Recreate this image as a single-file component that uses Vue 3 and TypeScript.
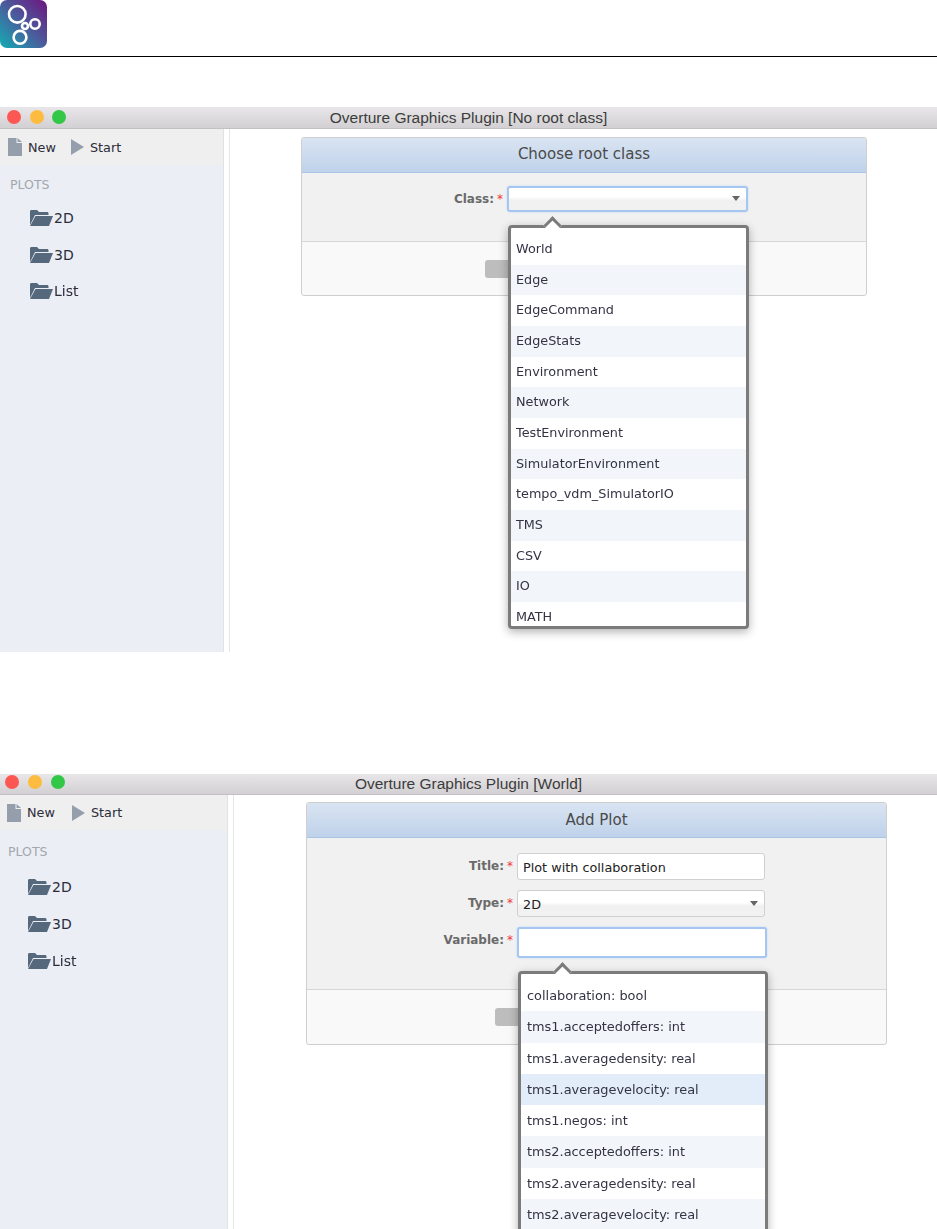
<script setup lang="ts">
interface Field { label: string; value: string; kind: 'text' | 'select' }
const plots: string[] = ['2D', '3D', 'List']
const classes: string[] = ['World', 'Edge', 'EdgeCommand', 'EdgeStats', 'Environment', 'Network', 'TestEnvironment', 'SimulatorEnvironment', 'tempo_vdm_SimulatorIO', 'TMS', 'CSV', 'IO', 'MATH']
const variables: string[] = ['collaboration: bool', 'tms1.acceptedoffers: int', 'tms1.averagedensity: real', 'tms1.averagevelocity: real', 'tms1.negos: int', 'tms2.acceptedoffers: int', 'tms2.averagedensity: real', 'tms2.averagevelocity: real']
const fields: Field[] = [
  { label: 'Title:', value: 'Plot with collaboration', kind: 'text' },
  { label: 'Type:', value: '2D', kind: 'select' },
]
</script>

<template>
  <div class="page">
    <header class="brand">
      <svg class="logo" width="47" height="48" viewBox="0 0 47 48">
        <defs>
          <linearGradient id="lg" x1="0" y1="1" x2="1" y2="0">
            <stop offset="0" stop-color="#12aeb4" />
            <stop offset="0.5" stop-color="#4a5c9c" />
            <stop offset="1" stop-color="#6e1580" />
          </linearGradient>
        </defs>
        <rect width="47" height="48" rx="7" fill="url(#lg)" />
        <g fill="none" stroke="#fff" stroke-width="2.6">
          <circle cx="17.300" cy="14.300" r="8.300" />
          <circle cx="35" cy="24" r="4.700" />
          <circle cx="25" cy="26" r="3" />
          <circle cx="20" cy="37.300" r="6.400" />
        </g>
      </svg>
    </header>

    <section class="window first">
      <div class="titlebar">
        <i class="dot red"></i><i class="dot yellow"></i><i class="dot green"></i>
        <span class="wintitle">Overture Graphics Plugin [No root class]</span>
      </div>
      <div class="winbody">
        <aside class="sidebar">
          <div class="tools">
            <span class="tool">
              <svg width="14" height="18" viewBox="0 0 14 18"><path d="M0 0h8.500v5H14v13H0z" fill="#959fab" /><path d="M9.500 0 14 4H9.500z" fill="#959fab" /></svg>New
            </span>
            <span class="tool">
              <svg width="13" height="16" viewBox="0 0 13 16"><path d="M0 0l13 8-13 8z" fill="#959fab" /></svg>Start
            </span>
          </div>
          <div class="plots-head">PLOTS</div>
          <div v-for="p in plots" :key="p" class="plot">
            <svg width="24" height="18" viewBox="0 0 24 18"><path d="M1 16V2.500C1 1.500 1.600 1 2.500 1H8l2 2h8c1 0 1.500.5 1.500 1.500V6H6L1 16z" fill="#56687c" /><path d="M6.500 7H24l-4 10H1z" fill="#56687c" /></svg>
            <span>{{ p }}</span>
          </div>
        </aside>
        <div class="divider"></div>
        <main class="content">
          <div class="card">
            <div class="card-head">Choose root class</div>
            <div class="card-body one">
              <div class="form-row">
                <label class="lab">Class:<b>*</b></label>
                <div class="control select focus"><span></span><i class="caret"></i></div>
              </div>
            </div>
            <div class="card-foot one"><span class="btn"></span></div>
            <div class="popup pop-class">
              <div class="arrow"></div>
              <div class="list">
                <div v-for="(c, i) in classes" :key="c" class="item" :class="{ odd: i % 2 === 1 }">{{ c }}</div>
              </div>
            </div>
          </div>
        </main>
      </div>
    </section>

    <section class="window second">
      <div class="titlebar">
        <i class="dot red"></i><i class="dot yellow"></i><i class="dot green"></i>
        <span class="wintitle">Overture Graphics Plugin [World]</span>
      </div>
      <div class="winbody">
        <aside class="sidebar">
          <div class="tools">
            <span class="tool">
              <svg width="14" height="18" viewBox="0 0 14 18"><path d="M0 0h8.500v5H14v13H0z" fill="#959fab" /><path d="M9.500 0 14 4H9.500z" fill="#959fab" /></svg>New
            </span>
            <span class="tool">
              <svg width="13" height="16" viewBox="0 0 13 16"><path d="M0 0l13 8-13 8z" fill="#959fab" /></svg>Start
            </span>
          </div>
          <div class="plots-head">PLOTS</div>
          <div v-for="p in plots" :key="p" class="plot">
            <svg width="24" height="18" viewBox="0 0 24 18"><path d="M1 16V2.500C1 1.500 1.600 1 2.500 1H8l2 2h8c1 0 1.500.5 1.500 1.500V6H6L1 16z" fill="#56687c" /><path d="M6.500 7H24l-4 10H1z" fill="#56687c" /></svg>
            <span>{{ p }}</span>
          </div>
        </aside>
        <div class="divider"></div>
        <main class="content">
          <div class="card">
            <div class="card-head">Add Plot</div>
            <div class="card-body two">
              <div v-for="f in fields" :key="f.label" class="form-row">
                <label class="lab">{{ f.label }}<b>*</b></label>
                <div class="control" :class="f.kind"><span>{{ f.value }}</span><i v-if="f.kind === 'select'" class="caret"></i></div>
              </div>
              <div class="form-row">
                <label class="lab">Variable:<b>*</b></label>
                <div class="control text focus"></div>
              </div>
            </div>
            <div class="card-foot two"><span class="btn"></span></div>
            <div class="popup pop-var">
              <div class="arrow"></div>
              <div class="list">
                <div v-for="(v, i) in variables" :key="v" class="item" :class="{ odd: i % 2 === 1, hover: i === 3 }">{{ v }}</div>
              </div>
            </div>
          </div>
        </main>
      </div>
    </section>
  </div>
</template>

<style>
html, body { margin: 0; background: #fff; overflow: hidden; }
</style>

<style scoped>
.page { width: 937px; height: 1229px; overflow: hidden; font-family: "DejaVu Sans", sans-serif; color: #2c2c3a; }
.brand { height: 56px; border-bottom: 1px solid #000; box-sizing: content-box; }
.logo { display: block; filter: blur(0.4px); }
.window { display: flex; flex-direction: column; overflow: hidden; filter: blur(0.35px); }
.first { margin-top: 50px; height: 545px; --side: 224px; --gap: 6px; }
.second { margin-top: 122px; height: 455px; --side: 228px; --gap: 6px; }
.titlebar { flex: none; position: relative; display: flex; align-items: center; justify-content: center; background: linear-gradient(#e8e6e8, #d2d0d2); border-bottom: 1px solid #c2c0c2; box-sizing: content-box; }
.first .titlebar { height: 21px; }
.second .titlebar { height: 20px; }
.dot { position: absolute; top: 3px; width: 14px; height: 14px; border-radius: 50%; }
.second .dot { top: 1px; }
.red { left: 7px; background: #fc5753; }
.yellow { left: 29.500px; background: #fdbc40; }
.green { left: 52px; background: #33c748; }
.second .red { left: 5px; }
.second .yellow { left: 28px; }
.second .green { left: 51px; }
.wintitle { font-family: "Liberation Sans", sans-serif; font-size: 15.500px; color: #3c3c3c; }
.winbody { flex: 1; display: flex; min-height: 0; }
.sidebar { width: var(--side); flex: none; background: #ebeff5; border-right: 1px solid #e2e2e2; box-sizing: border-box; }
.tools { height: 36px; background: #efefef; display: flex; align-items: center; padding-left: 8px; gap: 15px; font-size: 12.800px; color: #2c2c3a; }
.second .tools { height: 35px; padding-left: 7px; gap: 17px; }
.tool { display: inline-flex; align-items: center; gap: 6px; }
.plots-head { margin: 13px 0 0 10px; height: 14px; line-height: 14px; font-size: 12.500px; color: #a3a7ad; }
.second .plots-head { margin: 15px 0 0 8px; }
.plot { height: 36.500px; display: flex; align-items: center; margin-left: 29px; gap: 1px; font-size: 14px; color: #2c2c3a; }
.plots-head + .plot { margin-top: 8px; }
.second .plots-head + .plot { margin-top: 9.500px; }
.second .plot { height: 37px; margin-left: 27px; }
.divider { width: var(--gap); flex: none; background: #fff; border-right: 1px solid #e6e6e6; box-sizing: border-box; }
.content { flex: 1; min-width: 0; }
.first .content { padding: 8px 70px 0 71px; }
.second .content { padding: 7px 50px 0 72px; }
.card { position: relative; border: 1px solid #cfcfcf; border-radius: 3px; background: #f1f1f1; box-sizing: border-box; }
.card-head { text-align: center; font-size: 15px; color: #4a4a4a; background: linear-gradient(#d9e4f2, #bfd2ea); border-bottom: 1px solid #a9c5e6; height: 34px; line-height: 32px; border-radius: 2px 2px 0 0; box-sizing: content-box; }
.second .card-head { line-height: 34px; }
.card-body.one { border-bottom: 1px solid #d6d6d6; padding-top: 13px; box-sizing: border-box; height: 69px; }
.card-body.two { height: 152px; border-bottom: 1px solid #d6d6d6; padding-top: 15px; box-sizing: border-box; }
.card-foot { background: #f9f9f9; position: relative; border-radius: 0 0 3px 3px; }
.card-foot.one { height: 53px; }
.card-foot.two { height: 54px; }
.btn { position: absolute; background: #bdbdbd; border-radius: 3px; height: 18px; width: 40px; top: 18px; }
.one .btn { left: 183px; }
.two .btn { left: 188px; }
.form-row { display: flex; align-items: flex-start; margin-bottom: 10px; }
.lab { text-align: right; font-size: 12px; font-weight: 700; color: #6a6a6a; line-height: 26px; white-space: nowrap; box-sizing: border-box; padding-right: 4px; }
.lab b { color: #f03a3a; font-weight: 400; margin-left: 3px; }
.one .lab { width: 205px; }
.two .lab { width: 210px; }
.control { height: 27px; background: #fff; border: 1px solid #d0d0d0; border-radius: 3px; box-sizing: border-box; position: relative; font-size: 12.800px; line-height: 28px; padding-left: 5px; color: #222; }
.two .control { width: 248px; }
.two .control.select { background: linear-gradient(#fff 45%, #f0f0f0 60%, #f2f2f2); }
.one .control { width: 241px; height: 26px; background: linear-gradient(#fff 40%, #f0f0f0 58%, #f1f1f1); }
.control.focus { border: 2px solid #a4c6f0; box-shadow: 0 0 2px #bcd5f5; }
.two .control.focus { width: 250px; height: 31px; }
.caret { position: absolute; right: 6px; top: 10px; border-left: 4px solid transparent; border-right: 4px solid transparent; border-top: 5px solid #666; }
.one .caret { top: 8px; }
.popup { position: absolute; background: #fff; border: 3px solid #7b7b7b; border-radius: 4px; box-shadow: 0 3px 10px rgba(0, 0, 0, .3); box-sizing: border-box; }
.pop-class { left: 206px; top: 87px; width: 241px; height: 404px; }
.pop-var { left: 211px; top: 168px; width: 250px; height: 300px; }
.arrow { position: absolute; top: -9px; left: 35px; width: 13px; height: 13px; background: #fff; border-top: 3px solid #7b7b7b; border-left: 3px solid #7b7b7b; transform: rotate(45deg); box-sizing: border-box; }
.list { height: 100%; overflow: hidden; padding-top: 6px; box-sizing: border-box; position: relative; }
.item { padding-left: 5px; font-size: 12.800px; color: #333344; white-space: nowrap; }
.pop-class .item { height: 30.670px; line-height: 30.670px; }
.pop-var .item { height: 31.300px; line-height: 31.300px; padding-left: 6px; font-size: 12.900px; }
.odd { background: #f2f5fa; }
.hover { background: #e3edfa; }
</style>
